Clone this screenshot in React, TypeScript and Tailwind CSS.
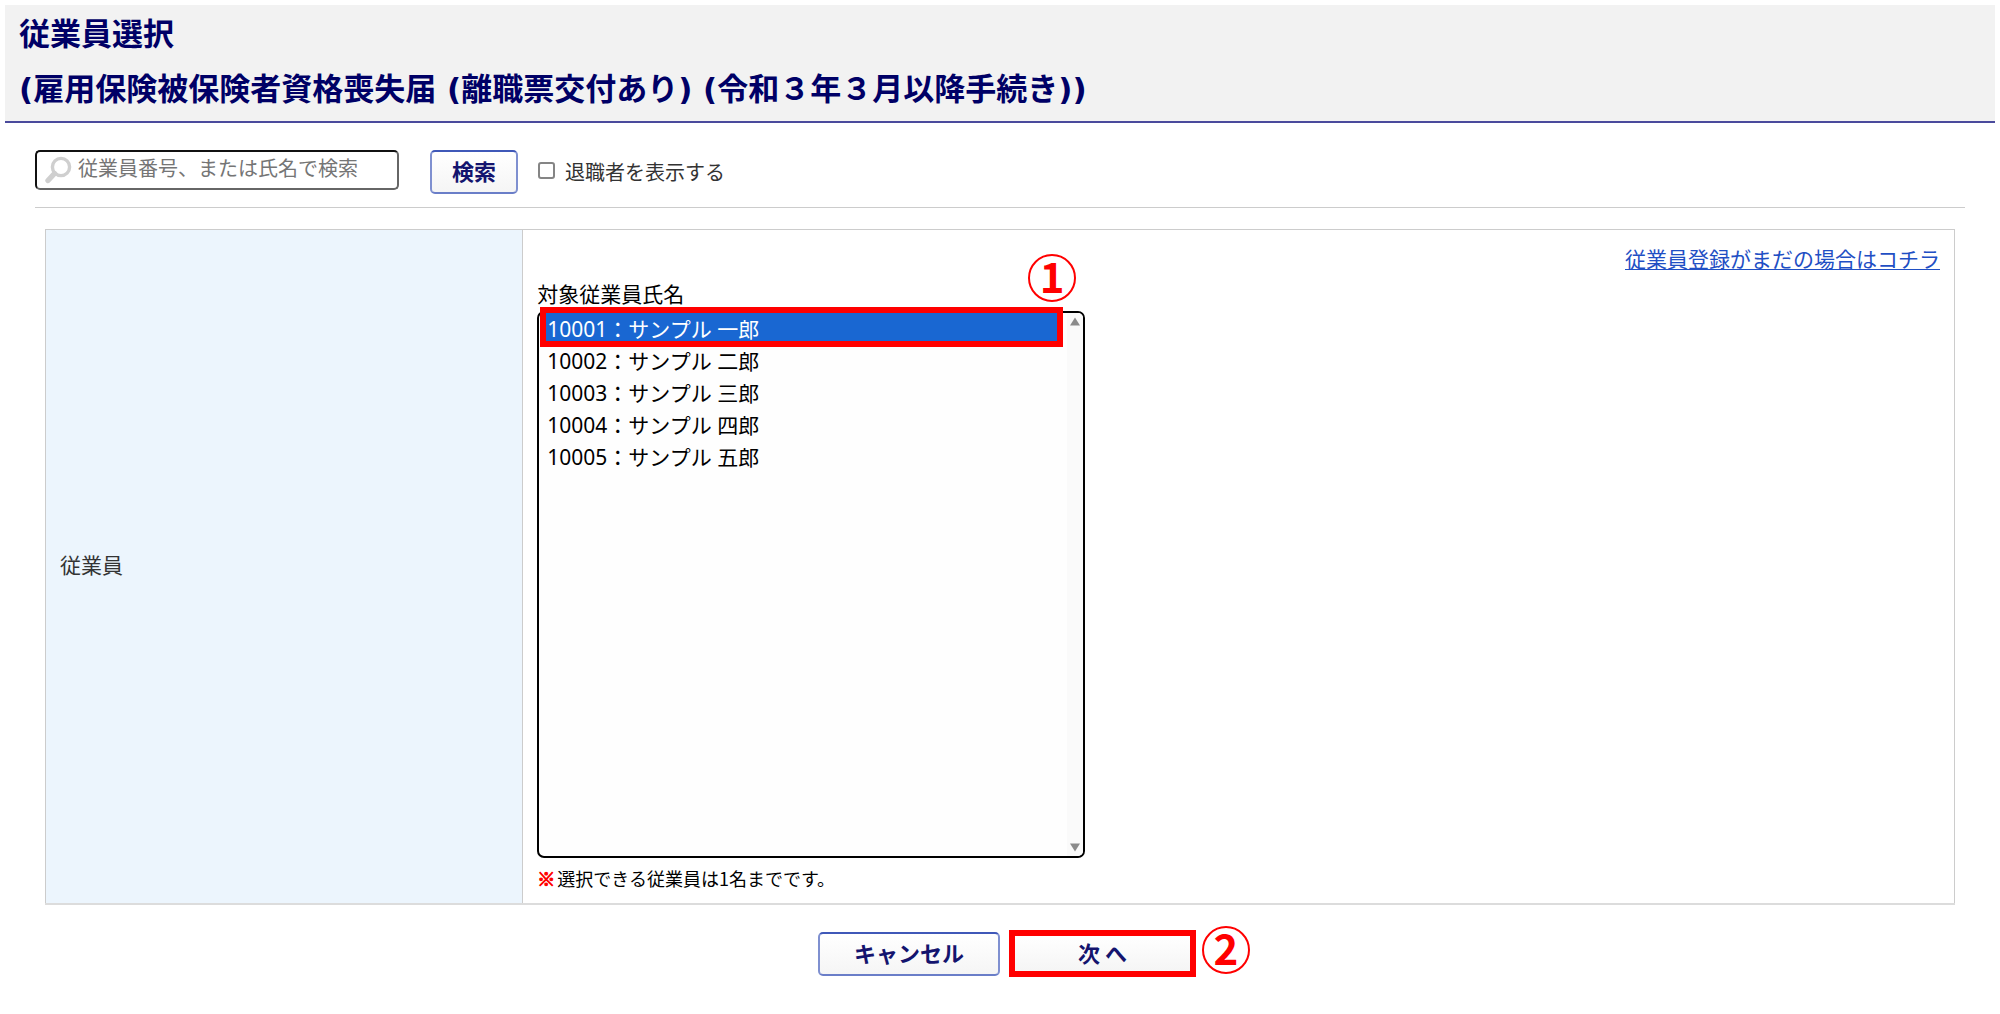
import { useState } from "react";

const employees = [
  { id: "10001", name: "サンプル 一郎" },
  { id: "10002", name: "サンプル 二郎" },
  { id: "10003", name: "サンプル 三郎" },
  { id: "10004", name: "サンプル 四郎" },
  { id: "10005", name: "サンプル 五郎" },
];

function StepMark({ n, className }: { n: number; className: string }) {
  return (
    <span
      className={`pointer-events-none absolute flex size-12 items-center justify-center rounded-full border-2 border-[#ff0000] pb-1.5 text-[42px] leading-none font-bold text-[#ff0000] ${className}`}
    >
      {n}
    </span>
  );
}

function PageHeader() {
  return (
    <header className="border-b-2 border-[#4a4a9c] bg-[#f2f2f2] px-3.5 pt-0.5 pb-1">
      <h1 className="font-['DejaVu_Sans','Noto_Sans_CJK_JP',sans-serif] text-[31px] leading-[55px] font-bold text-[#000066]">
        従業員選択
        <br />
        (雇用保険被保険者資格喪失届 (離職票交付あり) (令和３年３月以降手続き))
      </h1>
    </header>
  );
}

function SearchBar() {
  return (
    <form
      className="mx-[30px] flex items-start border-b border-[#cccccc] pt-[27px] pb-[13px]"
      onSubmit={(e) => e.preventDefault()}
    >
      <div className="relative">
        <svg
          className="absolute top-1.5 left-2.5"
          width="28"
          height="28"
          viewBox="0 0 28 28"
          fill="none"
          stroke="#cfcfcf"
          aria-hidden="true"
        >
          <circle cx="16" cy="11" r="8.6" strokeWidth="3.4" />
          <path d="M9.5 17.5 3 24.5" strokeWidth="5.4" strokeLinecap="round" />
        </svg>
        <input
          type="text"
          aria-label="従業員番号、または氏名で検索"
          placeholder="従業員番号、または氏名で検索"
          className="h-10 w-[364px] rounded-[5px] border-2 border-t-[#111111] border-r-[#666666] border-b-[#666666] border-l-[#111111] bg-transparent pb-1.5 pl-[41px] text-[20px] outline-none placeholder:text-[#757575]"
        />
      </div>
      <button
        type="submit"
        className="ml-[31px] h-11 w-[88px] rounded-[5px] border-2 border-t-[#3f58b8] border-r-[#7f90d0] border-b-[#6a7ec8] border-l-[#7f90d0] bg-linear-to-b from-white to-[#f5f5f5] pb-1 text-[22px] leading-none font-bold text-[#14146e]"
      >
        検索
      </button>
      <label className="ml-5 flex h-11 items-center text-[20px] text-[#333333]">
        <input
          type="checkbox"
          className="mr-2.5 mb-1 size-[17px] appearance-none rounded-[3px] border-2 border-[#858585] bg-white checked:bg-[#1967d2]"
        />
        退職者を表示する
      </label>
    </form>
  );
}

function EmployeeList() {
  const [selected, setSelected] = useState("10001");
  return (
    <div className="relative mt-0.5 w-[548px]">
      <select
        id="employee"
        size={17}
        value={selected}
        onChange={(e) => setSelected(e.target.value)}
        className="block h-[547px] w-full overflow-hidden rounded-[7px] border-2 border-black bg-[#fefefe] py-0 pr-[22px] pl-1.5 font-['Noto_Sans','Noto_Sans_CJK_JP',sans-serif] text-[21px] text-black outline-none"
      >
        {employees.map((e) => (
          <option
            key={e.id}
            value={e.id}
            className="h-8 px-0.5 pt-0 pb-1 leading-7 checked:bg-[#1967d2] checked:bg-[linear-gradient(#1967d2,#1967d2)] checked:text-white"
          >
            {e.id}：{e.name}
          </option>
        ))}
      </select>
      <div
        className="pointer-events-none absolute inset-y-0.5 right-0.5 flex w-4 flex-col items-center justify-between rounded-r-[5px] bg-[#fafafa] py-1"
        aria-hidden="true"
      >
        <svg width="10" height="9" viewBox="0 0 10 9" fill="#8b8b8b">
          <path d="M5 0.5 10 8.5H0Z" />
        </svg>
        <svg width="10" height="9" viewBox="0 0 10 9" fill="#8b8b8b">
          <path d="M5 8.5 10 0.5H0Z" />
        </svg>
      </div>
      <div className="pointer-events-none absolute -top-1 left-[3px] h-10 w-[523px] border-6 border-[#ff0000]" />
      <StepMark n={1} className="-top-[57px] left-[491px]" />
    </div>
  );
}

export default function App() {
  return (
    <div className="bg-white p-[5px] font-['Noto_Sans_CJK_JP','Noto_Sans',sans-serif] text-black">
      <PageHeader />
      <SearchBar />
      <main className="mx-10 mt-[21px]">
        <table className="w-full border-collapse border border-b-2 border-[#cccccc] border-b-[#dcdcdc]">
          <tbody>
            <tr>
              <th
                scope="row"
                className="w-1/4 border border-b-0 border-[#cccccc] bg-[#ecf5fd] px-3.5 pb-1 text-left align-middle text-[21px] font-normal text-[#333333]"
              >
                従業員
              </th>
              <td className="border border-b-0 border-[#cccccc] px-3.5 pt-3 pb-[9px] align-top">
                <div className="text-right text-[21px] leading-8">
                  <a
                    href="#register"
                    className="text-[#1f4fc4] underline decoration-1 underline-offset-2"
                  >
                    従業員登録がまだの場合はコチラ
                  </a>
                </div>
                <label htmlFor="employee" className="mt-[3px] block text-[21px] leading-8">
                  対象従業員氏名
                </label>
                <EmployeeList />
                <p className="mt-1 text-[18px] leading-8">
                  <span className="mr-0.5 font-bold text-[#ff0000] [-webkit-text-stroke:1px_#ff0000]">
                    ※
                  </span>
                  選択できる従業員は1名までです。
                </p>
              </td>
            </tr>
          </tbody>
        </table>
        <div className="flex items-center justify-center gap-[9px] pt-[25px] pb-8 pl-3.5 text-[22px] leading-none font-bold text-[#14146e]">
          <button
            type="button"
            className="h-11 w-[182px] rounded-[5px] border-2 border-t-[#3f58b8] border-r-[#7f90d0] border-b-[#6a7ec8] border-l-[#7f90d0] bg-linear-to-b from-white to-[#f5f5f5] pb-1"
          >
            キャンセル
          </button>
          <div className="relative">
            <button
              type="button"
              className="block h-[47px] w-[187px] border-6 border-[#ff0000] bg-linear-to-b from-white to-[#f5f5f5] pb-1"
            >
              次 へ
            </button>
            <StepMark n={2} className="-top-1 left-[193px]" />
          </div>
        </div>
      </main>
    </div>
  );
}
